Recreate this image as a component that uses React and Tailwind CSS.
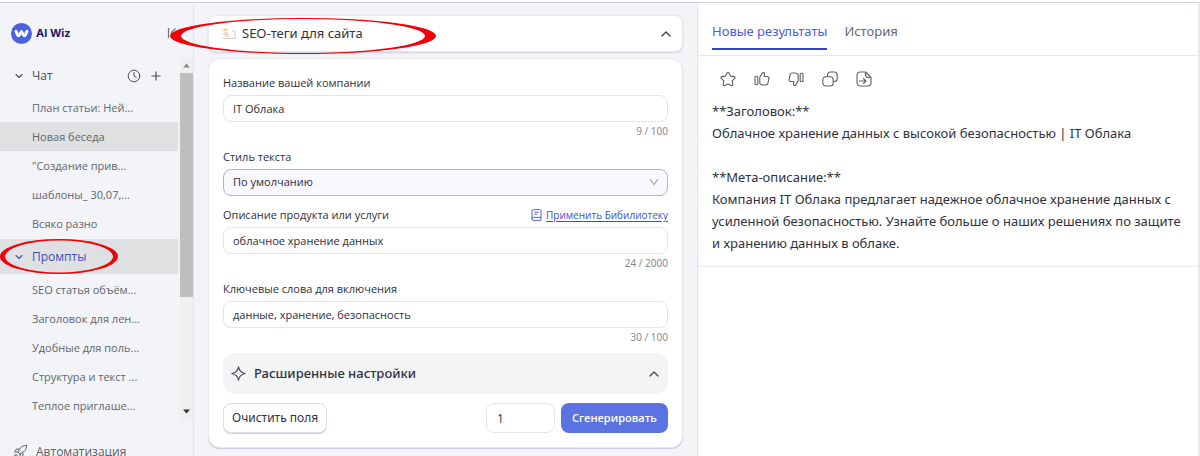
import React, { useState } from 'react';
import { ChevronDown, ChevronUp, Clock, Plus, Rocket } from 'lucide-react';

const chats = ['План статьи: Ней...', 'Новая беседа', '"Создание прив...', 'шаблоны_ 30,07,...', 'Всяко разно'];
const prompts = ['SEO статья объём...', 'Заголовок для лен...', 'Удобные для поль...', 'Структура и текст ...', 'Теплое приглаше...'];

const inputClass =
  'h-[27px] w-full rounded-lg border border-[#e3e5ea] bg-white px-[9px] text-[11px] text-[#2b2d3a] outline-none focus:border-[#5b73e0]';

export default function App() {
  return (
    <div className="flex h-screen flex-col overflow-hidden bg-white pt-[2px] font-['Open_Sans','Noto_Sans',sans-serif] text-[11px] text-[#2f3140]">
      <div className="grid min-h-0 flex-1 grid-cols-[196px_minmax(0,1fr)_minmax(0,1fr)] border-t border-r-2 border-t-[#cfd2da] border-r-[#e6e8f0] bg-[#f2f4f7]">
        <Sidebar />
        <main className="pt-3 pr-[14px] pl-3">
          <TemplateHeader />
          <TemplateForm />
        </main>
        <Results />
      </div>
    </div>
  );
}

function Sidebar() {
  return (
    <aside className="mr-[2px] flex flex-col border-r border-[#e2e4ea]">
      <div className="flex h-[55px] shrink-0 items-center pt-[5px] pr-[16px] pl-[11px]">
        <Logo />
        <span className="ml-1 flex-1 font-['Inter',sans-serif] text-[11px] font-bold text-[#1b1668]">AI Wiz</span>
        <button type="button" aria-label="Свернуть меню" className="text-[#6d7078]">
          <svg width="10" height="12" viewBox="0 0 10 12" fill="none" stroke="currentColor" strokeWidth="1.2">
            <path d="M1.5 1v10M8.5 1.5 4 6l4.5 4.5" />
          </svg>
        </button>
      </div>

      <div className="flex shrink-0">
        <nav className="min-w-0 flex-1">
          <div className="flex h-[35px] items-center pr-[15px] pl-[13px] text-[#4b4e57]">
            <ChevronDown size={12} strokeWidth={2.2} />
            <span className="ml-[7px] flex-1 text-xs font-medium">Чат</span>
            <button type="button" aria-label="История чатов"><Clock size={14} strokeWidth={1.7} /></button>
            <button type="button" aria-label="Новый чат" className="ml-2"><Plus size={14} strokeWidth={2} /></button>
          </div>
          {chats.map((title) => (
            <NavItem key={title} title={title} active={title === 'Новая беседа'} />
          ))}
          <div className="relative my-px flex h-[35px] items-center bg-[#dfe0e2] pl-[13px] text-[#3d4fc4]">
            <ChevronDown size={12} strokeWidth={2.2} />
            <span className="ml-[7px] text-xs font-medium">Промпты</span>
            <Marker className="absolute top-0 left-0 h-[35px] w-[118px]" inner={[54, 16]} width={118} height={35} />
          </div>
          {prompts.map((title) => <NavItem key={title} title={title} />)}
        </nav>

        {/* scroll track */}
        <div className="ml-[2px] flex w-[13px] flex-col items-center bg-[#f0f0f1]">
          <svg className="my-[5px]" width="7" height="5" viewBox="0 0 7 5" fill="#8b8b8b"><path d="M0 4.5 3.5 0.5 7 4.5z" /></svg>
          <div className="h-[224px] w-full bg-[#bebebe]" />
          <svg className="mt-auto mb-[6px]" width="7" height="5" viewBox="0 0 7 5" fill="#333"><path d="M0 0.5h7L3.5 4.5z" /></svg>
        </div>
      </div>

      <a href="#automation" className="mt-6 flex shrink-0 items-center pl-3 text-xs leading-4 font-medium text-[#5b5e68]">
        <Rocket size={16} strokeWidth={1.5} />
        <span className="ml-2">Автоматизация</span>
      </a>
    </aside>
  );
}

function NavItem({ title, active }) {
  return (
    <a href="#item" className={`block h-[29px] truncate pl-8 leading-[29px] text-[#62656f] ${active ? 'bg-[#dfe0e2]' : ''}`}>
      {title}
    </a>
  );
}

function Logo() {
  return (
    <svg width="21" height="21" viewBox="0 0 21 21">
      <circle cx="10.5" cy="10.5" r="10.5" fill="#4a62dc" />
      <path d="M5 8.300c.8.300 1 4.400 2.500 4.400 1.400 0 1.600-3.200 3-3.200s1.600 3.200 3 3.200c1.500 0 1.700-4.100 2.500-4.400" fill="none" stroke="#fff" strokeWidth="3" strokeLinecap="round" />
      <circle cx="10.5" cy="8.5" r="1.5" fill="#fff" />
    </svg>
  );
}

// Hand-drawn style ring: thin on top and bottom, heavy at the sides.
function Marker({ className, width, height, inner }) {
  const cx = width / 2;
  const cy = height / 2;
  const ring = (rx, ry) => `M${cx - rx} ${cy}a${rx} ${ry} 0 1 0 ${rx * 2} 0a${rx} ${ry} 0 1 0 ${-rx * 2} 0z`;
  return (
    <svg className={`pointer-events-none ${className}`} viewBox={`0 0 ${width} ${height}`} aria-hidden="true">
      <path d={ring(cx, cy) + ring(inner[0], inner[1])} fill="#f00008" fillRule="evenodd" />
    </svg>
  );
}

function TemplateHeader() {
  return (
    <div className="relative flex h-[37px] items-center rounded-lg border border-[#e8e9ef] bg-white pr-2 pl-[13px] shadow-[0_1px_2px_#cdcfe0]">
      <svg width="14" height="12" viewBox="0 0 14 12">
        <path d="M1 2.500h5M2 1h3" stroke="#f6d592" strokeWidth="1.500" />
        <path d="M2 5h4" stroke="#f3bd9f" strokeWidth="1" />
        <path d="M1 6.500h5v2M13 3.500v7H0.500M10 3h3" fill="none" stroke="#d0d2d8" strokeWidth="1.200" />
        <path d="M3 8.500h4" stroke="#f0d9ae" strokeWidth="1.200" />
      </svg>
      <h1 className="ml-[6px] flex-1 font-['Noto_Sans',sans-serif] text-[13px]">SEO-теги для сайта</h1>
      <button type="button" aria-label="Свернуть шаблон" className="text-[#3c3e46]"><ChevronUp size={16} strokeWidth={2} /></button>
      <Marker className="absolute top-[2px] -left-[39px] h-[36px] w-[266px]" inner={[122, 17]} width={266} height={36} />
    </div>
  );
}

function Field({ id, label, max, initial, action }) {
  const [value, setValue] = useState(initial);
  return (
    <div>
      <div className="flex h-6 items-center justify-between">
        <label htmlFor={id}>{label}</label>
        {action}
      </div>
      <input id={id} value={value} maxLength={max} onChange={(e) => setValue(e.target.value)} className={`block ${inputClass}`} />
      <div className="h-[18px] text-right font-['Noto_Sans',sans-serif] text-[10px] leading-[18px] text-[#888a92]">{value.length} / {max}</div>
    </div>
  );
}

function TemplateForm() {
  return (
    <form onSubmit={(e) => e.preventDefault()} className="mt-[6px] rounded-xl border border-[#e6e8ee] bg-white px-[14px] pt-3 pb-[14px] shadow-[0_1px_1px_#c6c9dc]">
      <Field id="company" label="Название вашей компании" max={100} initial="IT Облака" />

      <div className="mt-[5px] mb-[7px]">
        <label htmlFor="style" className="flex h-6 items-center">Стиль текста</label>
        <div className="relative">
          <select id="style" className="block h-[27px] w-full appearance-none rounded-lg border border-[#b2b1cb] bg-[#f8f8fe] px-[9px] text-[11px] text-[#2b2d3a] outline-none">
            <option>По умолчанию</option>
          </select>
          <svg width="10" height="8" viewBox="0 0 10 8" fill="none" stroke="#a3a4b4" strokeWidth="1.1" className="pointer-events-none absolute top-[9px] right-[9px]">
            <path d="M1 1l4 5.500L9 1" />
          </svg>
        </div>
      </div>

      <Field
        id="description"
        label="Описание продукта или услуги"
        max={2000}
        initial="облачное хранение данных"
        action={
          <a href="#library" className="flex items-center gap-1 text-[10px] text-[#4051c8]">
            <svg width="11" height="12" viewBox="0 0 11 12" fill="none" stroke="currentColor" strokeWidth="0.9">
              <path d="M2.5 .6h6a1.500 1.500 0 0 1 1.500 1.500v9.300H2.500A1.500 1.500 0 0 1 1 9.900V2.100A1.500 1.500 0 0 1 2.500 .6zM1 9.900a1.500 1.500 0 0 1 1.500-1.500H10M3.300 3.100h4.400M3.300 5.200h3" />
            </svg>
            <span className="underline underline-offset-2">Применить Бибилиотеку</span>
          </a>
        }
      />

      <div className="mt-[5px]">
        <Field id="keywords" label="Ключевые слова для включения" max={100} initial="данные, хранение, безопасность" />
      </div>

      <button type="button" aria-expanded="true" className="mt-[7px] flex h-[41px] w-full items-center rounded-xl bg-[#f2f4f6] pr-[6px] pl-2 text-left font-['Noto_Sans',sans-serif] text-[13px] font-medium">
        <svg width="15" height="15" viewBox="0 0 15 15" fill="none" stroke="#4c4e56" strokeWidth="1.2" strokeLinejoin="round">
          <path d="M7.5 .8C8.200 4.500 10.500 6.800 14.200 7.500 10.500 8.200 8.200 10.500 7.500 14.200 6.800 10.500 4.500 8.200 .8 7.500 4.500 6.800 6.800 4.500 7.500 .8z" />
        </svg>
        <span className="ml-2 flex-1">Расширенные настройки</span>
        <ChevronUp size={16} strokeWidth={2} className="text-[#4c4e56]" />
      </button>

      <div className="mt-[9px] flex items-center">
        <button type="reset" className="h-[30px] rounded-lg border border-[#dcdde6] bg-white px-2 font-['Noto_Sans',sans-serif] text-xs shadow-[0_1px_0_#cfd0e6]">Очистить поля</button>
        <input aria-label="Количество вариантов" defaultValue="1" className="ml-auto h-[30px] w-[69px] rounded-lg border border-[#e3e5ea] px-[10px] text-xs outline-none" />
        <button type="submit" className="ml-[6px] h-[30px] rounded-lg bg-[#5b73e0] px-[11px] text-[11px] font-semibold text-white">Сгенерировать</button>
      </div>
    </form>
  );
}

const actions = [
  { label: 'В избранное', d: 'M8 1.300c.5 0 .8.300 1 .7l1.500 3.100 3.600.5c1 .1 1.300 1.100.6 1.800l-2.500 2.500.6 3.500c.1.900-.7 1.500-1.500 1.100L8 12.900l-3.300 1.600c-.8.400-1.600-.2-1.500-1.100l.6-3.500-2.500-2.500c-.7-.7-.4-1.700.6-1.800l3.600-.5L7 2c.2-.4.5-.7 1-.7z' },
  { label: 'Нравится', d: 'M1 6.300c0-.8.300-1 1-1h.8c.7 0 1 .2 1 1v6.500c0 .8-.3 1-1 1H2c-.7 0-1-.2-1-1zM5.800 6.200 8.300 2.100c.6-1 2.300-.6 2.200.8L10.100 5.500h3.200c1.100 0 1.800.8 1.600 1.900l-1 5c-.2 1-.9 1.600-1.900 1.600H8.600c-.5 0-.9-.1-1.300-.4l-1.500-1.100z' },
  { label: 'Не нравится', d: 'M15 9.700c0 .8-.3 1-1 1h-.8c-.7 0-1-.2-1-1V3.200c0-.8.300-1 1-1h.8c.7 0 1 .2 1 1zM10.200 9.800 7.700 13.900c-.6 1-2.300.6-2.200-.8l.4-2.600H2.700c-1.100 0-1.800-.8-1.600-1.900l1-5C2.300 2.600 3 2 4 2h3.400c.5 0 .9.100 1.300.4l1.500 1.100z' },
  { label: 'Копировать', d: 'M4 5.800h4.200a3 3 0 0 1 3 3v3.200a3 3 0 0 1-3 3H3.800a3 3 0 0 1-3-3V8.800a3 3 0 0 1 3-3zM5.500 5.800V4a3 3 0 0 1 3-3h3.700a3 3 0 0 1 3 3v3.500a3 3 0 0 1-3 3h-1' },
  { label: 'Экспорт', d: 'M9.500 1H4.200A3.200 3.200 0 0 0 1 4.200v7.600A3.200 3.200 0 0 0 4.200 15h7.600a3.200 3.200 0 0 0 3.200-3.200V6.500L9.500 1v2.500a3 3 0 0 0 3 3H15M3.500 10h6M7.500 7.500 10 10l-2.500 2.500' },
];

function Results() {
  return (
    <section className="border-l border-[#e2e4ea] bg-white font-['Noto_Sans',sans-serif] text-[13px]">
      <div role="tablist" className="flex h-[53px] items-start gap-[17px] border-b border-[#e4e6eb] pt-3 pl-[14px]">
        <button type="button" role="tab" aria-selected="true" className="h-[35px] border-b-2 border-[#2f46c8] text-[#4a5ed6]">Новые результаты</button>
        <button type="button" role="tab" aria-selected="false" className="h-[35px] border-b-2 border-transparent text-[#666972]">История</button>
      </div>
      <article className="border-b border-[#e8eaee] pr-4 pb-3 pl-[14px]">
        <div className="flex gap-[18px] pt-[15px] pb-[13px] pl-2">
          {actions.map((a) => (
            <button key={a.label} type="button" aria-label={a.label} className="text-[#5e6068]">
              <svg width="16" height="16" viewBox="0 0 16 16" fill="none" stroke="currentColor" strokeWidth="1.1" strokeLinejoin="round" strokeLinecap="round"><path d={a.d} /></svg>
            </button>
          ))}
        </div>
        <p className="leading-[22px]">
          **Заголовок:**<br />
          Облачное хранение данных с высокой безопасностью | IT Облака
        </p>
        <p className="mt-[22px] leading-[22px]">
          **Мета-описание:**<br />
          Компания IT Облака предлагает надежное облачное хранение данных с усиленной безопасностью. Узнайте больше о наших решениях по защите и хранению данных в облаке.
        </p>
      </article>
    </section>
  );
}
